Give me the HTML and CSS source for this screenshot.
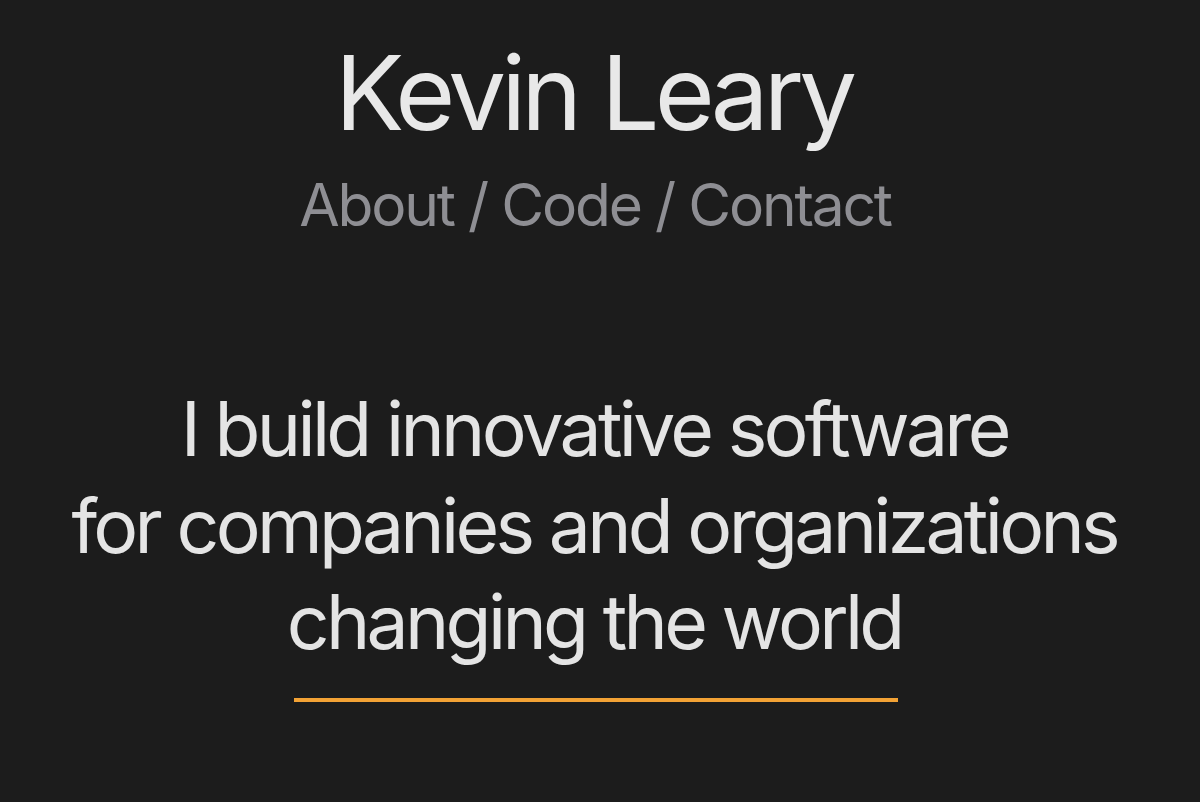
FILE: index.html
```html
<!DOCTYPE html>
<html lang="en">
<head>
<meta charset="utf-8">
<title>Kevin Leary</title>
<link rel="stylesheet" href="styles.css">
</head>
<body>
<div class="page">
  <header class="masthead">
    <h1 class="name">Kevin Leary</h1>
    <nav class="nav">
      <a href="#about">About</a> / <a href="#code">Code</a> / <a href="#contact">Contact</a>
    </nav>
  </header>
  <main class="hero">
    <p class="tagline">I build innovative software<br>for companies and organizations<br>changing the world</p>
    <div class="rule"></div>
  </main>
</div>
</body>
</html>
```

FILE: styles.css
```css
html, body {
  margin: 0;
  padding: 0;
  background: #1c1c1c;
}
body {
  font-family: Inter, "Noto Sans", sans-serif;
  color: #e6e6e6;
}
.page {
  display: flex;
  flex-direction: column;
  align-items: center;
  padding-right: 8px;
  height: 802px;
  box-sizing: border-box;
}
.masthead {
  display: flex;
  flex-direction: column;
  align-items: center;
  padding-top: 32.5px;
}
.name {
  margin: 0;
  padding-right: 4.8px;
  font-size: 103px;
  font-weight: 400;
  line-height: 120px;
  letter-spacing: -4.9px;
  white-space: nowrap;
  color: #e8e8e8;
}
.nav {
  margin-top: 17px;
  padding-right: 2px;
  font-size: 58.7px;
  line-height: 70px;
  letter-spacing: -2.2px;
  white-space: nowrap;
  color: #8e8e93;
}
.nav a {
  color: #8e8e93;
  text-decoration: none;
}
.hero {
  display: flex;
  flex-direction: column;
  align-items: center;
  padding-top: 141.5px;
}
.tagline {
  margin: 0;
  padding-right: 3.6px;
  font-size: 75px;
  line-height: 96.7px;
  letter-spacing: -3.7px;
  white-space: nowrap;
  text-align: center;
  color: #e4e4e4;
}
.rule {
  width: 604px;
  height: 4px;
  background: #f2a235;
  margin-top: 26.8px;
}
```
